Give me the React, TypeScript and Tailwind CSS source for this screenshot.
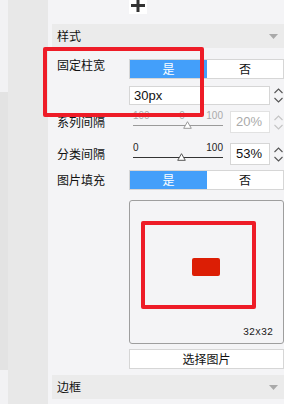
import React from 'react';

const cjk = { fontFamily: '"Noto Sans CJK SC", "Noto Sans", sans-serif' };
const latin = { fontFamily: '"Liberation Sans", Arial, sans-serif' };

function Caret() {
  return (
    <svg width="9" height="5" viewBox="0 0 9 5" className="mr-[6px]">
      <polygon points="0,0 9,0 4.5,5" fill="#a9a9a9" />
    </svg>
  );
}

function Header({ title }: { title: string }) {
  return (
    <div className="flex h-[24px] items-center justify-between bg-[#ebebeb] pl-[5px]">
      <span className="text-[12px] leading-none text-[#111]" style={cjk}>{title}</span>
      <Caret />
    </div>
  );
}

function Toggle() {
  return (
    <div className="flex h-[20px] w-[155px] border border-[#d6d6d6] bg-white text-[12px]" style={cjk}>
      <div className="flex w-[77px] items-center justify-center bg-[#439ffa] text-white">是</div>
      <div className="flex flex-1 items-center justify-center text-[#111]">否</div>
    </div>
  );
}

function Spin({ disabled }: { disabled?: boolean }) {
  const c = disabled ? '#c4c4c4' : '#555';
  return (
    <div className="flex w-[12px] flex-col items-center justify-center gap-[3px]">
      <svg width="9" height="6" viewBox="0 0 9 6">
        <polyline points="0.5,5 4.5,1 8.5,5" fill="none" stroke={c} strokeWidth="1.1" />
      </svg>
      <svg width="9" height="6" viewBox="0 0 9 6">
        <polyline points="0.5,1 4.5,5 8.5,1" fill="none" stroke={c} strokeWidth="1.1" />
      </svg>
    </div>
  );
}

function Slider({ disabled, value }: { disabled?: boolean; value: number }) {
  const text = disabled ? 'text-[#aaa]' : 'text-[#222]';
  const line = disabled ? 'bg-[#9a9a9a]' : 'bg-[#333]';
  return (
    <div className="relative ml-[4px] flex h-[22px] w-[90px] flex-col justify-start">
      <div className={`flex h-[11px] items-start justify-between text-[10px] leading-none ${text}`} style={latin}>
        {disabled ? (
          <>
            <span>100</span>
            <span className="ml-[8px]">0</span>
            <span>100</span>
          </>
        ) : (
          <>
            <span>0</span>
            <span>100</span>
          </>
        )}
      </div>
      <div className={`mt-[3px] h-px w-full ${line}`} />
      <svg
        width="9"
        height="8"
        viewBox="0 0 9 8"
        className="absolute top-[10px]"
        style={{ left: `${value}px` }}
      >
        <polygon points="4.5,0.7 8.3,7.3 0.7,7.3" fill="#fff" stroke={disabled ? '#9a9a9a' : '#555'} strokeWidth="1" />
      </svg>
    </div>
  );
}

function NumBox({ value, disabled }: { value: string; disabled?: boolean }) {
  return (
    <div className="ml-auto flex h-[22px] items-stretch">
      <div
        className={`flex w-[40px] items-center border bg-white pl-[5px] text-[13px] ${
          disabled ? 'border-[#e2e2e2] text-[#aaa]' : 'border-[#d6d6d6] text-[#111]'
        }`}
        style={latin}
      >
        {value}
      </div>
      <div className="w-[2px]" />
      <Spin disabled={disabled} />
    </div>
  );
}

function Label({ text }: { text: string }) {
  return (
    <div className="w-[72px] shrink-0 text-[12px] leading-none text-[#111]" style={cjk}>
      {text}
    </div>
  );
}

export default function App() {
  return (
    <div className="relative flex h-[404px] w-[284px] overflow-hidden bg-[#f4f4f6]">
      <div className="flex w-[8px] flex-col">
        <div className="h-[92px] bg-[#f2f2f4]" />
        <div className="h-[278px] bg-[#e3e3e3]" />
        <div className="flex-1 bg-[#f2f2f4]" />
      </div>
      <div className="w-[40px] bg-[#e8e8e8]" />

      <div className="flex flex-1 flex-col pl-[4px]">
        <div className="ml-[77px] flex h-[14px] w-[18px] items-start justify-center bg-white">
          <svg width="16" height="13" viewBox="0 0 16 13">
            <rect x="1" y="4" width="14" height="3" fill="#333" />
            <rect x="6.5" y="0" width="3" height="12" fill="#333" />
          </svg>
        </div>

        <div className="mt-[10px]">
          <Header title="样式" />
        </div>

        <div className="mt-[11px] flex pl-[5px]">
          <Label text="固定柱宽" />
          <div className="flex flex-col">
            <Toggle />
            <div className="mt-[7px] flex h-[19px]">
              <div className="flex w-[141px] items-center border border-[#d6d6d6] bg-white pl-[4px] text-[13px] text-[#111]" style={latin}>
                30px
              </div>
              <div className="w-[2px]" />
              <Spin />
            </div>
          </div>
        </div>

        <div className="mt-[6px] flex h-[22px] items-center pl-[5px]">
          <Label text="系列间隔" />
          <Slider disabled value={50} />
          <NumBox value="20%" disabled />
        </div>

        <div className="mt-[10px] flex h-[22px] items-center pl-[5px]">
          <Label text="分类间隔" />
          <Slider value={44} />
          <NumBox value="53%" />
        </div>

        <div className="mt-[5px] flex h-[20px] items-center pl-[5px]">
          <Label text="图片填充" />
          <Toggle />
        </div>

        <div className="relative ml-[77px] mt-[10px] h-[144px] w-[155px] rounded-[3px] border border-[#9e9e9e] bg-[#f4f4f6] pl-[11px] pt-[20px]">
          <div className="h-[88px] w-[115px] rounded-[2px] border-[4px] border-[#ee1c27] pl-[47px] pt-[33px]">
            <div className="h-[18px] w-[28px] rounded-[2px] bg-[#dc1e05]" />
          </div>
          <span className="absolute bottom-[5px] right-[10px] text-[10px] leading-none text-[#222]" style={{ fontFamily: '"Liberation Mono", monospace' }}>
            32x32
          </span>
        </div>

        <div className="ml-[77px] mt-[5px] flex h-[20px] w-[155px] items-center justify-center border border-[#d6d6d6] bg-white text-[12px] text-[#111]" style={cjk}>
          选择图片
        </div>

        <div className="mt-[6px]">
          <Header title="边框" />
        </div>
      </div>

      <div className="pointer-events-none absolute left-[43px] top-[47px] h-[70px] w-[161px] rounded-[2px] border-[4px] border-[#ee1c27]" />
    </div>
  );
}
